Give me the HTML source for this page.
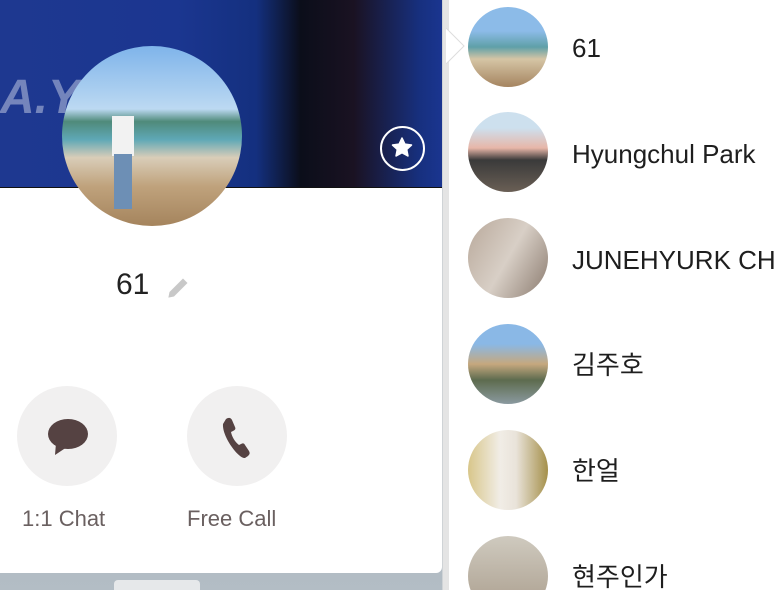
<!DOCTYPE html>
<html><head><meta charset="utf-8"><style>
html,body{margin:0;width:776px;height:590px;overflow:hidden}
body{background:#fff;font-family:"Liberation Sans","Noto Sans CJK KR",sans-serif;position:relative}
.abs{position:absolute}
.av{position:absolute;left:468px;width:80px;height:80px;border-radius:50%;overflow:hidden}
.nm{position:absolute;left:572px;font-size:26px;color:#1e1e1e;white-space:nowrap;line-height:30px}
</style></head><body>
<div class="abs" style="left:0;top:0;width:448px;height:590px;background:linear-gradient(#8d9aa5,#b3bdc5)"></div>
<div class="abs" style="left:114px;top:580px;width:86px;height:14px;background:#e6e8ea;border-radius:4px"></div>
<div class="abs" style="left:0;top:0;width:442px;height:573px;background:#fff;border-bottom-right-radius:6px"></div>
<div class="abs" style="left:0;top:0;width:442px;height:187px;background:linear-gradient(90deg,#1e3890 0%,#1b3690 40%,#14307f 58%,#0b0e1a 68%,#1a1222 80%,#17307f 95%,#1a3590 100%);border-bottom:1px solid #111"></div>
<div class="abs" style="left:0;top:70px;font-size:48px;font-weight:bold;color:#9aa6cf;font-style:italic;opacity:.7">A.Y</div>
<div class="abs" style="left:62px;top:46px;width:180px;height:180px;border-radius:50%;overflow:hidden;background:linear-gradient(#7fb4ea 0%,#bcd9f2 35%,#4f8a7a 42%,#5fa8b6 52%,#d9cdb8 62%,#bfa27c 78%,#a5845d 100%)">
 <div class="abs" style="left:50px;top:70px;width:22px;height:40px;background:#f2f2f2"></div>
 <div class="abs" style="left:52px;top:108px;width:18px;height:55px;background:#6d8fb5"></div>
</div>
<div class="abs" style="left:380px;top:126px;width:41px;height:41px;border:2px solid #fff;border-radius:50%"></div>
<svg class="abs" style="left:389px;top:135px" width="26" height="25" viewBox="0 0 24 24"><path d="M12 3l2.8 5.8 6.3.8-4.6 4.3 1.2 6.2L12 17l-5.7 3.1 1.2-6.2L2.9 9.6l6.3-.8z" fill="#fff" stroke="#fff" stroke-linejoin="round" stroke-width="1.5"/></svg>
<div class="abs" style="left:116px;top:268px;font-size:30px;color:#222">61</div>
<svg class="abs" style="left:165px;top:274px" width="27" height="27" viewBox="0 0 24 24"><path d="M3 21l1-5L16 4l4 4L8 20z" fill="#c8c8c8"/></svg>
<div class="abs" style="left:17px;top:386px;width:100px;height:100px;border-radius:50%;background:#f1f0f0"></div>
<svg class="abs" style="left:47px;top:417px" width="42" height="40" viewBox="0 0 42 40"><ellipse cx="21" cy="17" rx="20" ry="15" fill="#554242"/><path d="M9 26l-1 12 12-8z" fill="#554242"/></svg>
<div class="abs" style="left:187px;top:386px;width:100px;height:100px;border-radius:50%;background:#f1f0f0"></div>
<svg class="abs" style="left:220px;top:417px" width="34" height="42" viewBox="0 0 34 42"><path d="M6 2c3-2 5-1 6 1l3 7c1 2 0 3-2 4l-2 1c1 5 4 10 8 13l2-1c2-1 3-1 4 1l4 6c1 2 1 3-1 5l-3 2C19 42 2 20 3 7z" fill="#554242"/></svg>
<div class="abs" style="left:22px;top:506px;font-size:22px;color:#6a6060">1:1 Chat</div>
<div class="abs" style="left:187px;top:506px;font-size:22px;color:#6a6060">Free Call</div>
<div class="abs" style="left:442px;top:0;width:6px;height:590px;background:#e4e4e4;border-left:1px solid #cfd3d6"></div>
<svg class="abs" style="left:446px;top:28px" width="20" height="36"><path d="M0 0L18 18L0 36z" fill="#fff"/><path d="M0 0L18 18L0 36" fill="none" stroke="#ddd"/></svg>
<div class="av" style="top:7px;background:linear-gradient(#8cbbe8 30%,#5fa0a8 50%,#d5c5a5 65%,#a58460)"></div>
<div class="nm" style="top:33px">61</div>
<div class="av" style="top:112px;background:linear-gradient(#cde0ee 20%,#e7b6a8 45%,#3a3a3a 60%,#6a5f55)"></div>
<div class="nm" style="top:139px">Hyungchul Park</div>
<div class="av" style="top:218px;background:linear-gradient(120deg,#b8a89a,#d8cfc6 50%,#8a7a6e)"></div>
<div class="nm" style="top:245px">JUNEHYURK CH</div>
<div class="av" style="top:324px;background:linear-gradient(#8ab8e6 25%,#c6a87e 50%,#5d6b4e 70%,#8b9aa0)"></div>
<div class="nm" style="top:350px">김주호</div>
<div class="av" style="top:430px;background:linear-gradient(90deg,#d8c68a,#f1ede6 40%,#e9e3da 60%,#a5904a)"></div>
<div class="nm" style="top:456px">한얼</div>
<div class="av" style="top:536px;background:linear-gradient(#cfcabf,#a89b8a)"></div>
<div class="nm" style="top:562px">현주인가</div>
</body></html>
